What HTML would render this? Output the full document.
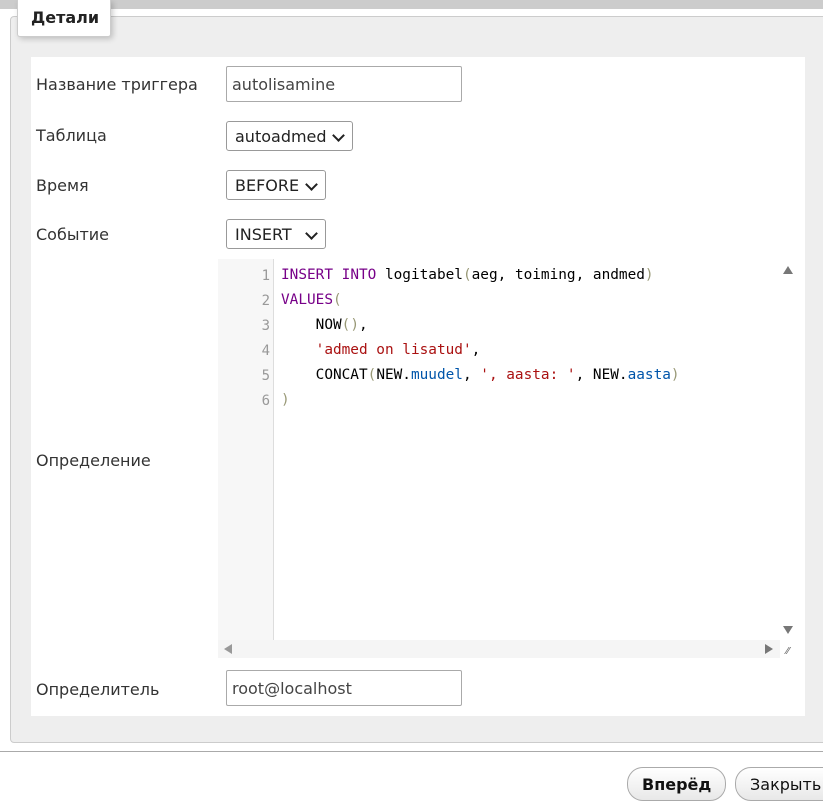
<!DOCTYPE html>
<html><head><meta charset="utf-8"><style>
*{box-sizing:border-box}
body{margin:0;width:823px;height:797px;overflow:hidden;background:#fff;font-family:"DejaVu Sans","Liberation Sans",sans-serif;font-size:16px;color:#333;position:relative}
.top{position:absolute;left:0;top:0;width:823px;height:9px;background:#ccc}
.fs{position:absolute;left:10px;top:16px;width:830px;height:727px;background:#eee;border:1px solid #ccc;border-radius:4px 0 0 4px}
.legend{position:absolute;left:17px;top:0;width:94px;height:37px;background:#fff;border:1px solid #ccc;border-top:none;border-radius:0 0 3px 3px;box-shadow:2px 2px 6px rgba(0,0,0,.2);font-weight:bold;color:#222;font-size:16px;padding:8px 0 0 13px}
.inner{position:absolute;left:31px;top:57px;width:774px;height:659px;background:#fff}
.lbl{position:absolute;left:36px;font-size:16px;color:#333;white-space:nowrap}
.inp{position:absolute;left:226px;width:236px;height:36px;border:1px solid #aaa;border-radius:2px;padding:8px 5px;font-size:16px;color:#444;white-space:nowrap}
.sel{position:absolute;left:226px;height:30px;border:1px solid #999;border-radius:3px;padding:5px 8px;font-size:16px;color:#222;white-space:nowrap}
.sel:after{content:"";position:absolute;right:9px;top:9px;width:7px;height:7px;border-right:2px solid #222;border-bottom:2px solid #222;transform:rotate(45deg)}
.ed{position:absolute;left:218px;top:259px;width:587px;height:399px;background:#fff}
.gut{position:absolute;left:0;top:0;width:56px;height:381px;background:#f7f7f7;border-right:1px solid #ddd}
.ln{position:absolute;left:0;width:52px;text-align:right;color:#999;font-family:"DejaVu Sans Mono",monospace;font-size:14px}
.cl{position:absolute;left:63px;font-family:"DejaVu Sans Mono","Liberation Mono",monospace;font-size:14.4px;color:#000;white-space:pre}
.k{color:#708}.s{color:#a11}.v{color:#05a}.b{color:#997}
.hs{position:absolute;left:0;top:381px;width:562px;height:18px;background:#f5f5f5}
.btn{position:absolute;top:767px;height:34px;border:1px solid #aaa;border-radius:16px;background:linear-gradient(#fff,#e8e8e8);font-size:16px;padding:7px 14px;color:#111;white-space:nowrap}
</style></head><body>
<div class="top"></div>
<div class="fs"></div>
<div class="legend">Детали</div>
<div class="inner"></div>
<div class="lbl" style="top:75px">Название триггера</div>
<div class="inp" style="top:66px">autolisamine</div>
<div class="lbl" style="top:126px">Таблица</div>
<div class="sel" style="top:121px;width:127px">autoadmed</div>
<div class="lbl" style="top:176px">Время</div>
<div class="sel" style="top:170px;width:100px">BEFORE</div>
<div class="lbl" style="top:225px">Событие</div>
<div class="sel" style="top:219px;width:100px">INSERT</div>
<div class="lbl" style="top:451px">Определение</div>
<div class="ed">
<div class="gut"></div>
<div class="ln" style="top:9px">1</div><div class="ln" style="top:34px">2</div><div class="ln" style="top:59px">3</div><div class="ln" style="top:84px">4</div><div class="ln" style="top:109px">5</div><div class="ln" style="top:134px">6</div>
<div class="cl" style="top:8px"><span class="k">INSERT</span> <span class="k">INTO</span> logitabel<span class="b">(</span>aeg, toiming, andmed<span class="b">)</span></div>
<div class="cl" style="top:33px"><span class="k">VALUES</span><span class="b">(</span></div>
<div class="cl" style="top:58px">    NOW<span class="b">()</span>,</div>
<div class="cl" style="top:83px">    <span class="s">'admed on lisatud'</span>,</div>
<div class="cl" style="top:108px">    CONCAT<span class="b">(</span>NEW.<span class="v">muudel</span>, <span class="s">', aasta: '</span>, NEW.<span class="v">aasta</span><span class="b">)</span></div>
<div class="cl" style="top:133px"><span class="b">)</span></div>
<div class="hs"></div>
<div style="position:absolute;left:565px;top:7px;border:5px solid transparent;border-bottom:8px solid #777;border-top:none;width:0"></div>
<div style="position:absolute;left:565px;top:367px;border:5px solid transparent;border-top:8px solid #777;border-bottom:none;width:0"></div>
<div style="position:absolute;left:6px;top:385px;border:5px solid transparent;border-right:8px solid #999;border-left:none;width:0"></div>
<div style="position:absolute;left:547px;top:385px;border:5px solid transparent;border-left:8px solid #777;border-right:none;width:0"></div>
<div style="position:absolute;left:568px;top:387px;color:#666;font-size:10px">⁄⁄</div>
</div>
<div class="lbl" style="top:680px">Определитель</div>
<div class="inp" style="top:670px">root@localhost</div>
<div style="position:absolute;left:0;top:751px;width:823px;height:1px;background:#aaa"></div>
<div class="btn" style="left:627px;font-weight:bold">Вперёд</div>
<div class="btn" style="left:735px;width:110px">Закрыть</div>
</body></html>
